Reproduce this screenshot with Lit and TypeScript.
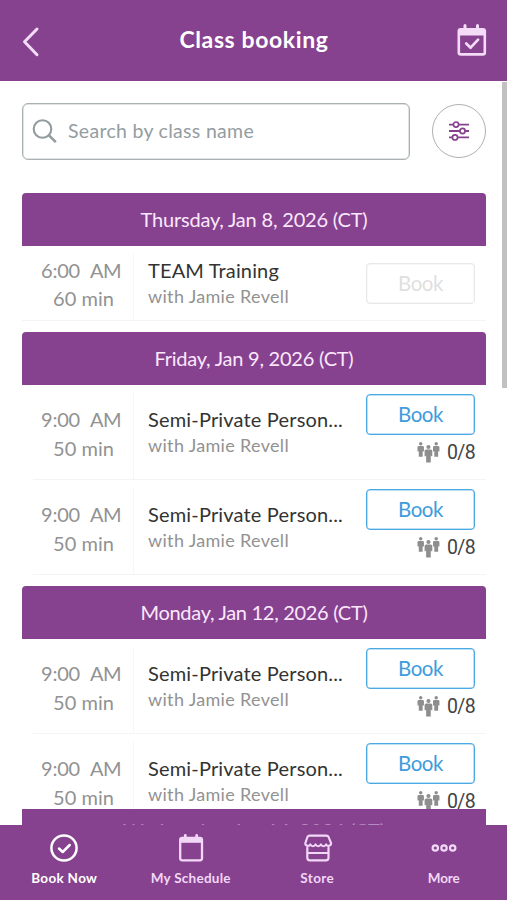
import { LitElement, html, css, svg } from "lit";
import { customElement, property } from "lit/decorators.js";

interface Session { time: string; mins: string; name: string; nameWidth: number; open: boolean; }
interface Day { label: string; width: number; sessions: Session[]; }

const semi: Session = { time: "9:00", mins: "50 min", name: "Semi-Private Person...", nameWidth: 195, open: true };
const days: Day[] = [
  { label: "Thursday, Jan 8, 2026 (CT)", width: 227, sessions: [
    { time: "6:00", mins: "60 min", name: "TEAM Training", nameWidth: 131, open: false }] },
  { label: "Friday, Jan 9, 2026 (CT)", width: 199, sessions: [semi, semi] },
  { label: "Monday, Jan 12, 2026 (CT)", width: 227, sessions: [semi, semi] },
];

/* A single line of text tracked so that it spans a given width. */
@customElement("tracked-text")
class TrackedText extends LitElement {
  @property() text = "";
  @property({ type: Number }) width = 0;
  static styles = css`
    :host { display: inline-block; white-space: pre; }
  `;
  render() { return html`<span>${this.text}</span>`; }
  updated() {
    const span = this.renderRoot.querySelector("span")!;
    span.style.letterSpacing = "0";
    const natural = span.getBoundingClientRect().width;
    const gap = (this.width - natural) / this.text.length;
    span.style.letterSpacing = gap.toFixed(3) + "px";
  }
}

const tt = (text: string, width: number) => html`<tracked-text .text=${text} .width=${width}></tracked-text>`;

const person = (x: number, y: number, k: number) => svg`<g transform="translate(${x} ${y}) scale(${k})">
  <circle cx="3.5" cy="2" r="1.9"/>
  <path d="M1.4 4.3h4.2q1.4 0 1.4 1.4v4.6H6V10h-.4v6H1.4v-6H1v.3H0V5.7q0-1.4 1.4-1.4z"/></g>`;

@customElement("class-row")
class ClassRow extends LitElement {
  @property({ attribute: false }) session!: Session;
  static styles = css`
    :host { display: block; }
    .row { display: grid; grid-template-columns: 101px 1fr 108px; height: 95px; padding-right: 11px; box-sizing: border-box; border-bottom: 1px solid #f4f4f4; margin-left: 11px; }
    .row.closed { height: 75px; margin-left: 0; grid-template-columns: 112px 1fr 108px; }
    .time { margin-top: 8px; padding: 11.5px 12px 0 0; border-right: 1px solid #f6f6f6; box-sizing: border-box; color: #929292; font-size: 20px; line-height: 29px; }
    .closed .time { padding-top: 2.5px; line-height: 28px; }
    .clock { display: flex; justify-content: flex-end; gap: 10px; }
    .mins { display: flex; justify-content: flex-end; padding-right: 7px; }
    .info { padding: 20.5px 0 0 14px; }
    .closed .info { padding-top: 11px; }
    .name { font-size: 20px; line-height: 26px; color: #333; }
    .coach { font-size: 18px; line-height: 26px; color: #929292; }
    .action { padding-top: 8.6px; }
    .closed .action { padding-top: 17px; }
    button { display: flex; justify-content: center; align-items: center; width: 109px; height: 41px; margin: 0 0 0 -1px; padding: 0; box-sizing: border-box; border: 1px solid #4aa9e3; box-shadow: inset 0 0 0 .5px #7cc1ea; border-radius: 4px; background: #fff; color: #3d9cdc; font: 20.5px Lato, sans-serif; }
    .closed button { border-color: #e8e8e8; box-shadow: inset 0 0 0 .5px #f0f0f0; color: #dfdfdf; }
    .spots { display: flex; justify-content: flex-end; gap: 7px; height: 35px; align-items: center; font: 19.5px Roboto, sans-serif; color: #444; }
    svg { display: block; fill: #8e8e8e; margin-top: 2px; }
  `;
  render() {
    const s = this.session;
    return html`<div class="row ${s.open ? "" : "closed"}">
      <div class="time">
        <div class="clock">${tt(s.time, 39)}${tt("AM", 31)}</div>
        <div class="mins">${tt(s.mins, 61)}</div>
      </div>
      <div class="info">
        <div class="name">${tt(s.name, s.nameWidth)}</div>
        <div class="coach">${tt("with Jamie Revell", 141)}</div>
      </div>
      <div class="action">
        <button>${tt("Book", 45)}</button>
        ${s.open ? html`<div class="spots">
          <svg width="23" height="22" viewBox="0 0 23 22">${person(0.5, 0, 0.92)}${person(16, 0, 0.92)}${person(7.6, 2.8, 1.1)}</svg>${tt("0/8", 28)}</div>` : ""}
      </div>
    </div>`;
  }
}

@customElement("app-root")
class AppRoot extends LitElement {
  static styles = css`
    :host { display: flex; flex-direction: column; height: 900px; width: 507px; overflow: hidden; position: relative; background: #fff; font-family: Lato, sans-serif; }
    header { flex: none; height: 81px; background: #86428f; display: flex; justify-content: space-between; align-items: center; padding: 0 20px 0 20px; box-sizing: border-box; color: #fff; }
    h1 { margin: 0; font-size: 23px; font-weight: 700; line-height: 28px; padding-bottom: 3px; }
    svg { display: block; fill: none; }
    header svg { stroke: #f4dcf8; }
    main { flex: 1; min-height: 0; overflow: hidden; padding: 22px 21px 0 22px; }
    .tools { display: flex; justify-content: space-between; align-items: center; height: 57px; margin-bottom: 32.5px; }
    .search { display: flex; align-items: center; gap: 11px; width: 388px; height: 57px; box-sizing: border-box; padding: 0 0 2px 9px; border: 1px solid #aab1b3; box-shadow: inset 0 0 0 .5px #c3c8ca; border-radius: 6px; color: #949da1; font-size: 19.5px; }
    .search svg { stroke: #929b9e; }
    .filter { width: 54px; height: 54px; box-sizing: border-box; border: 1px solid #adb1b3; border-radius: 50%; display: grid; place-items: center; margin-bottom: 1px; }
    .filter svg { stroke: #86428f; }
    .day { margin-bottom: 11px; }
    h2 { margin: 0; height: 53.25px; padding-bottom: 1px; box-sizing: border-box; background: #86428f; border-radius: 4px 4px 0 0; color: #fbe8fd; font-size: 20px; font-weight: 400; display: flex; align-items: center; justify-content: center; }
    .peek { position: absolute; left: 22px; top: 809px; width: 464px; height: 53px; background: #86428f; display: flex; justify-content: center; color: #b98abf; font-size: 20px; line-height: 43px; }
    .scroll { position: absolute; right: 0; top: 82px; width: 5px; height: 306px; background: #c1c1c1; }
    nav { flex: none; height: 75px; background: #86428f; display: grid; grid-template-columns: repeat(4, 1fr); position: relative; z-index: 1; color: #f2d7f7; padding-left: 1px; box-sizing: border-box; }
    .tab { display: flex; flex-direction: column; align-items: center; padding-top: 8px; font-size: 13.5px; font-weight: 700; line-height: 18px; }
    .tab svg { stroke: currentColor; margin-bottom: 6px; }
    .tab.on { color: #fff; }
  `;
  render() {
    const tabs = [
      { label: "Book Now", w: 66, icon: svg`<circle cx="16" cy="15" r="12.6" stroke-width="2.5"/><path d="M11 15.5l3.7 3.5 7-7" stroke-width="2.5" stroke-linecap="round" stroke-linejoin="round"/>` },
      { label: "My Schedule", w: 80, icon: svg`<rect x="5.2" y="4.8" width="21.8" height="22.5" rx="2" stroke-width="2.3"/><path d="M5 7.3h22" stroke-width="5"/><path d="M10.3 5V2.4M21.7 5V2.4" stroke-width="2.8" stroke-linecap="round"/>` },
      { label: "Store", w: 34, icon: svg`<path d="M8.5 2.6h17q1.4 0 2 1.2l2.5 6c.7 3.2-3.6 4.1-4.9 1.6-1.2 2.4-4 2.4-5.2 0-1.2 2.4-4.2 2.4-5.4 0-1.2 2.4-4 2.4-5.2 0-1.4 2.5-5.6 1.6-4.9-1.6l2.1-6q.6-1.2 2-1.2z" stroke-width="2.1" stroke-linejoin="round"/><path d="M6.3 14.8v10q0 2.5 2.5 2.5h16.2q2.5 0 2.5-2.5v-10M6.3 20h21.2" stroke-width="2.2" stroke-linecap="round"/>` },
      { label: "More", w: 32, icon: svg`<g stroke-width="2.2"><circle cx="7.3" cy="15" r="2.7"/><circle cx="16" cy="15" r="2.7"/><circle cx="24.7" cy="15" r="2.7"/></g>` },
    ];
    return html`
      <header>
        <svg width="32" height="36" viewBox="0 0 32 36"><path d="M17 6L4.5 18.7 17 31.7" stroke-width="3" stroke-linecap="round" stroke-linejoin="round"/></svg>
        <h1>${tt("Class booking", 149)}</h1>
        <svg width="31" height="36" viewBox="0 0 31 36"><rect x="2.8" y="6.2" width="26" height="25.2" rx="2" stroke-width="2.6"/><path d="M2 9.5h27" stroke-width="6"/><path d="M9 7V2.5M21.5 7V2.5" stroke-width="3" stroke-linecap="round"/><path d="M10.2 20.5l4.4 4.2 7.5-8" stroke-width="2.7" stroke-linecap="round" stroke-linejoin="round"/></svg>
      </header>
      <main>
        <div class="tools">
          <div class="search">
            <svg width="25" height="26" viewBox="0 0 25 26"><circle cx="10.5" cy="11" r="8.8" stroke-width="2.1"/><path d="M17 17.3l6.8 6.8" stroke-width="2.5"/></svg>
            ${tt("Search by class name", 186)}
          </div>
          <div class="filter"><svg width="22" height="22" viewBox="0 0 22 22"><path d="M1 4.6h4.4m5.2 0H21M1 11h11m5.2 0H21M1 17.4h3.4m5.2 0H21" stroke-width="1.9"/><g stroke-width="1.7"><circle cx="8" cy="4.6" r="2.6"/><circle cx="14.5" cy="11" r="2.6"/><circle cx="7" cy="17.4" r="2.6"/></g></svg></div>
        </div>
        ${days.map((d) => html`<section class="day">
          <h2>${tt(d.label, d.width)}</h2>
          ${d.sessions.map((s) => html`<class-row .session=${s}></class-row>`)}
        </section>`)}
      </main>
      <div class="peek">${tt("Wednesday, Jan 14, 2026 (CT)", 262)}</div>
      <div class="scroll"></div>
      <nav>${tabs.map((t, i) => html`<div class="tab ${i === 0 ? "on" : ""}">
        <svg width="32" height="30" viewBox="0 0 32 30">${t.icon}</svg>${tt(t.label, t.w)}</div>`)}</nav>
    `;
  }
}
